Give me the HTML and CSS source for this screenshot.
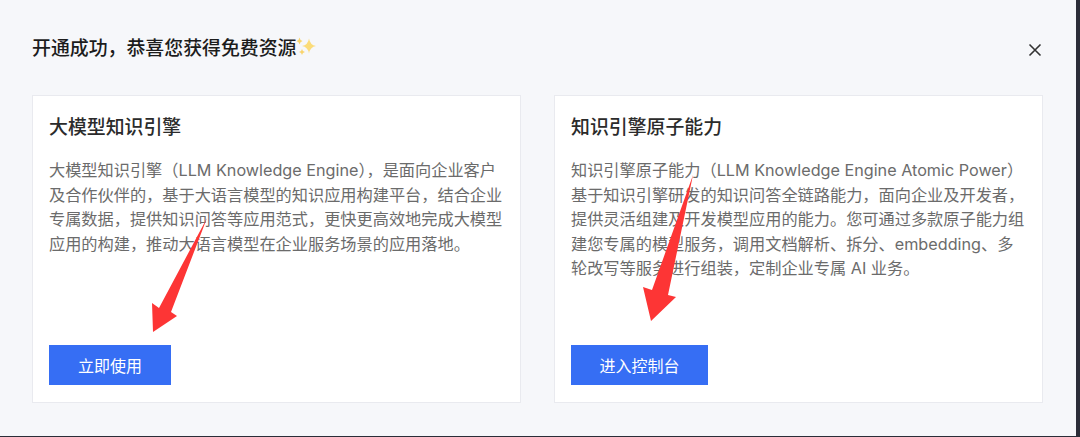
FILE: index.html
```html
<!DOCTYPE html>
<html lang="zh-CN">
<head>
    <meta charset="UTF-8">
    <meta name="viewport" content="width=device-width, initial-scale=1.0">
    <title>开通成功</title>
    <link rel="stylesheet" href="styles.css">
</head>
<body>
    <div class="modal">
        <div class="modal-header">
            <h2>开通成功，恭喜您获得免费资源<svg class="sparkle" viewBox="0 0 20 20"><path d="M13 2.500 Q14 9 20 10 Q14 11 13 17.500 Q12 11 6 10 Q12 9 13 2.500Z" fill="#fbdc7a"/><path d="M3.500 1.500 Q4 4.500 6.500 5 Q4 5.500 3.500 8.500 Q3 5.500 .5 5 Q3 4.500 3.500 1.500Z" fill="#f9d46c"/><path d="M6 13 Q6.400 15.600 9 16 Q6.400 16.400 6 19 Q5.600 16.400 3 16 Q5.600 15.600 6 13Z" fill="#f9d46c"/></svg></h2>
            <button class="close-btn" aria-label="关闭">
                <svg viewBox="0 0 14 14"><path d="M1.500 1.500l11 11M12.500 1.500l-11 11"/></svg>
            </button>
        </div>
        <div class="cards">
            <div class="card">
                <h3>大模型知识引擎</h3>
                <p>大模型知识引擎（LLM Knowledge Engine），是面向企业客户及合作伙伴的，基于大语言模型的知识应用构建平台，结合企业专属数据，提供知识问答等应用范式，更快更高效地完成大模型应用的构建，推动大语言模型在企业服务场景的应用落地。</p>
                <button class="primary-btn btn-use">立即使用</button>
            </div>
            <div class="card">
                <h3>知识引擎原子能力</h3>
                <p>知识引擎原子能力（LLM Knowledge Engine Atomic Power）基于知识引擎研发的知识问答全链路能力，面向企业及开发者，提供灵活组建及开发模型应用的能力。您可通过多款原子能力组建您专属的模型服务，调用文档解析、拆分、embedding、多轮改写等服务进行组装，定制企业专属 AI 业务。</p>
                <button class="primary-btn btn-console">进入控制台</button>
            </div>
        </div>
    </div>
    <!-- red arrows drawn on top of the screenshot -->
    <svg class="arrows" viewBox="0 0 1080 437">
        <polygon points="207,218 171,312 177,316 153,332 152,303 159,308" fill="#fd3535"/>
        <polygon points="693,175 668,295 676,297 651,321 643,287 652,290" fill="#fd3535"/>
    </svg>
</body>
</html>
```

FILE: styles.css
```css
* {
    margin: 0;
    padding: 0;
    box-sizing: border-box;
}
body {
    width: 1080px;
    height: 437px;
    overflow: hidden;
    position: relative;
    background-color: #2b2d38;
    font-family: "Liberation Sans", "Noto Sans CJK SC", sans-serif;
}
.modal {
    width: 1076px;
    height: 436px;
    padding: 33px 33px 0 32px;
    background-color: #f6f7fa;
}
.modal-header {
    display: flex;
    justify-content: space-between;
    align-items: center;
    height: 26px;
    margin-bottom: 36px;
}
.modal-header h2 {
    display: flex;
    align-items: center;
    font-size: 18.9px;
    font-weight: 500;
    color: #1c1c1c;
}
.sparkle {
    width: 20px;
    height: 20px;
}
.close-btn {
    width: 14px;
    height: 14px;
    margin: 8px 1px 0 0;
    border: none;
    background: none;
}
.close-btn svg {
    display: block;
    width: 14px;
    height: 14px;
    fill: none;
    stroke: #333;
    stroke-width: 1.6;
}
.cards {
    display: flex;
    gap: 33px;
}
.card {
    width: 489px;
    height: 308px;
    padding: 18px 16px 17px;
    display: flex;
    flex-direction: column;
    align-items: flex-start;
    background: #fff;
    border: 1px solid #e9eaef;
}
.card h3 {
    font-size: 18.9px;
    font-weight: 500;
    line-height: 28px;
    color: #2b2b2b;
    margin-bottom: 16px;
}
.card p {
    width: 455px;
    font-family: Inter, "Noto Sans CJK SC", sans-serif;
    font-size: 16.2px;
    line-height: 24.5px;
    color: #6b6b6b;
}
.primary-btn {
    margin-top: auto;
    height: 40px;
    font-family: inherit;
    font-size: 16px;
    color: #fff;
    background-color: #366ef4;
    border: none;
}
.btn-use {
    width: 122px;
}
.btn-console {
    width: 137px;
}
.arrows {
    position: absolute;
    top: 0;
    left: 0;
    width: 1080px;
    height: 437px;
    pointer-events: none;
}
```
